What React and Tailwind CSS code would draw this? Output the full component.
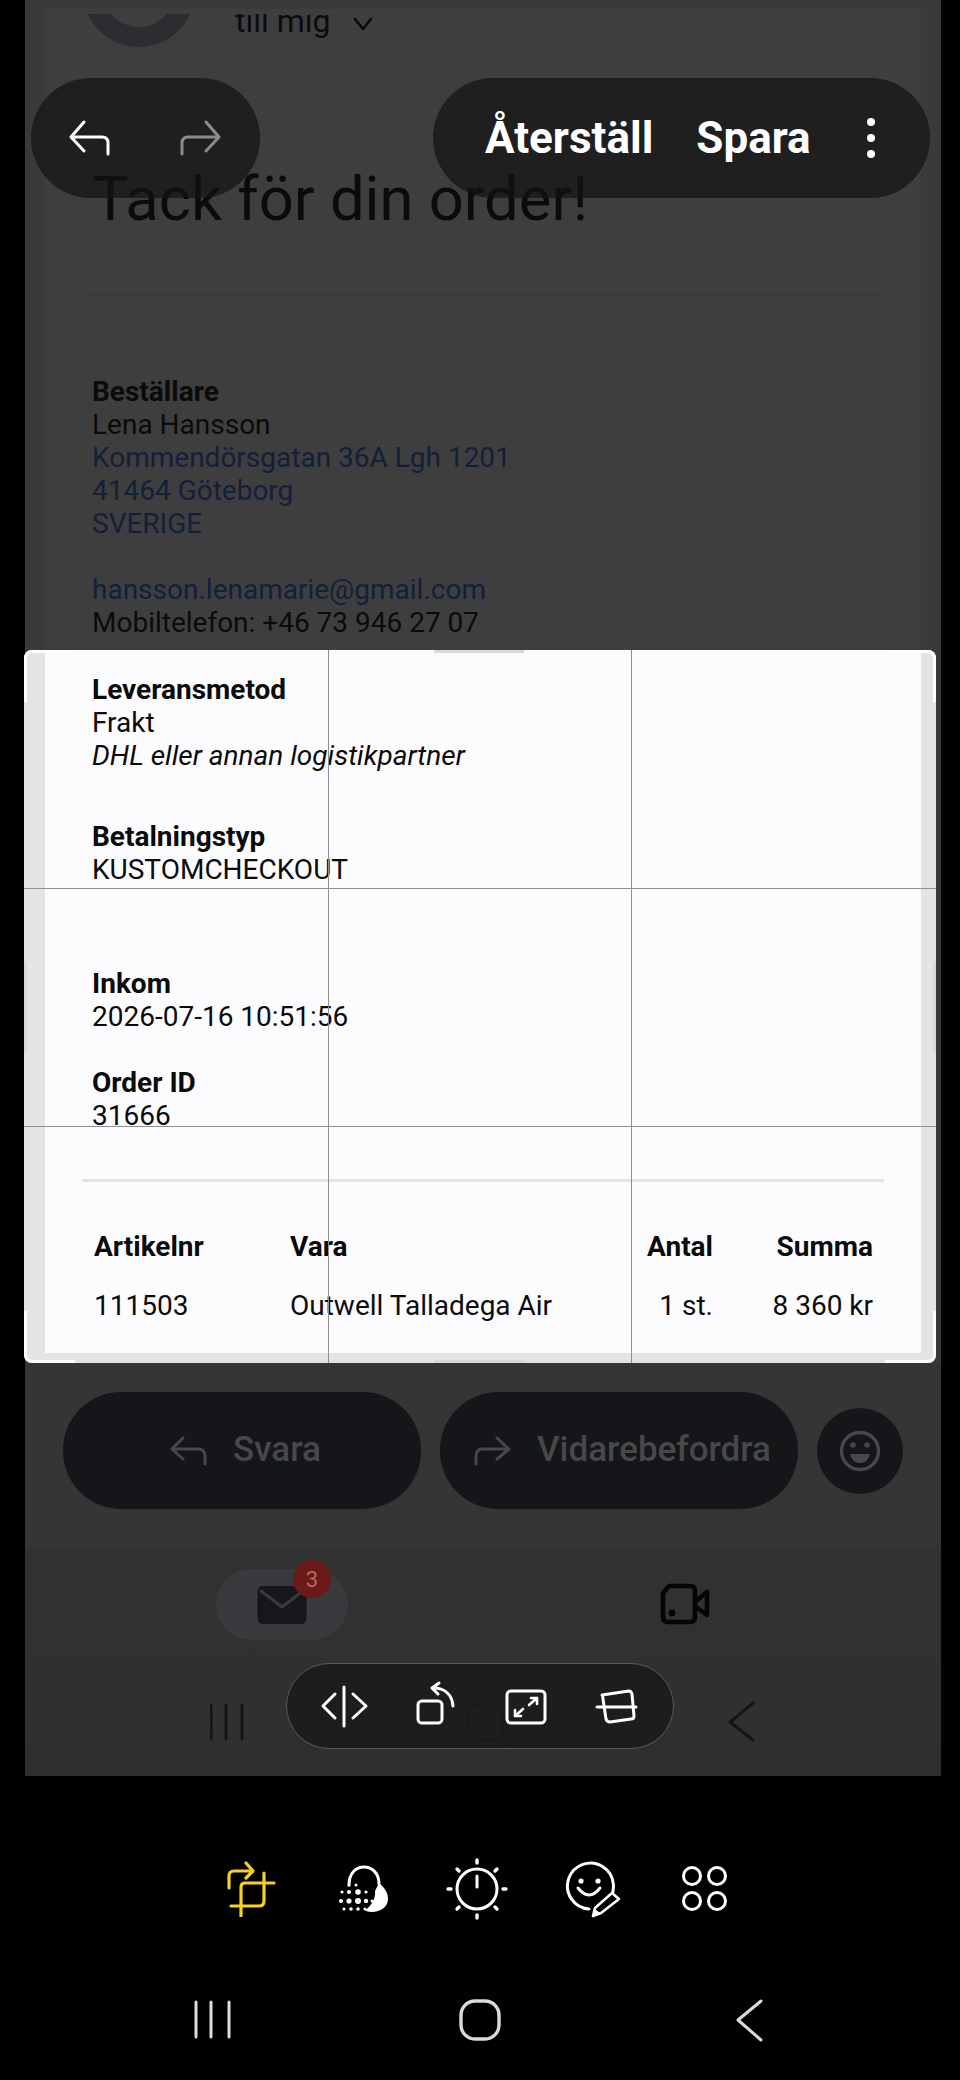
import React from "react";

const Ico = ({ x, y, w, h, className = "", children }) => (
  <svg viewBox={`${x} ${y} ${w} ${h}`} width={w} height={h} fill="none" strokeLinecap="round" strokeLinejoin="round" className={className}>
    {children}
  </svg>
);

const Line = ({ children, className = "" }) => <div className={`h-[33px] leading-[33px] whitespace-nowrap ${className}`}>{children}</div>;
const Bold = ({ children }) => <Line className="font-bold">{children}</Line>;
const Link = ({ children }) => <Line className="text-[#12203a]">{children}</Line>;

const Handles = () => (
  <div className="absolute inset-0 pointer-events-none">
    <div className="absolute top-0 bottom-0 w-px bg-[#8f8f8f]" style={{ left: 304 }} />
    <div className="absolute top-0 bottom-0 w-px bg-[#8f8f8f]" style={{ left: 607 }} />
    <div className="absolute left-0 right-0 h-px bg-[#8f8f8f]" style={{ top: 238 }} />
    <div className="absolute left-0 right-0 h-px bg-[#8f8f8f]" style={{ top: 476 }} />
    <div className="absolute left-0 top-0 w-[51px] h-[52px] border-l-[3px] border-t-[3px] border-white rounded-tl-[8px]" />
    <div className="absolute right-0 top-0 w-[51px] h-[52px] border-r-[3px] border-t-[3px] border-white rounded-tr-[8px]" />
    <div className="absolute left-0 bottom-0 w-[51px] h-[52px] border-l-[3px] border-b-[3px] border-white rounded-bl-[8px]" />
    <div className="absolute right-0 bottom-0 w-[51px] h-[52px] border-r-[3px] border-b-[3px] border-white rounded-br-[8px]" />
    <div className="absolute left-[410px] top-0 w-[90px] h-[3px] bg-[#d8d8d8]" />
    <div className="absolute left-[410px] bottom-0 w-[90px] h-[3px] bg-[#d8d8d8]" />
    <div className="absolute left-0 top-[311px] w-[3px] h-[91px] bg-[#d8d8d8]" />
    <div className="absolute right-0 top-[311px] w-[3px] h-[91px] bg-[#d8d8d8]" />
  </div>
);

const TopBars = () => (
  <>
    <div className="absolute left-[31px] top-[78px] w-[229px] h-[120px] rounded-[60px] bg-[#121212]/70 flex items-center pl-[33px]">
      <Ico x={64} y={116} w={160} h={44} className="block">
        <path d="M84 122 L71 137 L84 151 M71 137 H102 Q108 137 108 143 V154" stroke="#fff" strokeWidth="3" />
        <path d="M206 122 L219 137 L206 151 M219 137 H188 Q182 137 182 143 V154" stroke="#8c8c8c" strokeWidth="3" />
      </Ico>
    </div>
    <div className="absolute left-[433px] top-[78px] w-[497px] h-[120px] rounded-[60px] bg-[#121212]/70 flex items-center text-white font-bold text-[44px] pl-[52px]">
      <span className="leading-none">Återställ</span>
      <span className="leading-none ml-[43px]">Spara</span>
      <Ico x={862} y={114} w={16} h={48} className="ml-[52px]">
        <circle cx="870" cy="122" r="4" fill="#fff" />
        <circle cx="870" cy="138" r="4" fill="#fff" />
        <circle cx="870" cy="154" r="4" fill="#fff" />
      </Ico>
    </div>
  </>
);

const CropPill = () => (
  <div className="absolute left-[286px] top-[1663px] w-[388px] h-[86px] rounded-[43px] bg-[#1c1c1c]/90 border border-[#5a5a5a] flex items-center">
    <svg viewBox="286 1663 388 86" width="388" height="86" fill="none" stroke="#fff" strokeWidth="3" strokeLinecap="round" strokeLinejoin="round" className="-m-px">
      <path d="M344 1687 V1726" />
      <path d="M335 1694 L323 1706 L335 1718 M353 1694 L366 1706 L353 1718" />
      <rect x="418" y="1701" width="24" height="22" rx="4" />
      <path d="M453 1706 C452 1695 445 1688 433 1688 M439 1683 L432 1688 L438 1694" />
      <rect x="507" y="1691" width="38" height="32" rx="4" />
      <path d="M515 1716 L523 1709 M515 1710 V1716 H521 M537 1698 L529 1705 M531 1698 H537 V1704" strokeWidth="2.6" />
      <path d="M602 1695 L629 1691 Q631 1691 632 1694 L634 1716 Q634 1719 631 1719 L610 1722 Q607 1722 606 1719 L603 1699 Q603 1696 602 1695 Z" />
      <path d="M597 1707 H636" />
    </svg>
  </div>
);

export default function App() {
  return (
    <div className="relative w-[960px] h-[2080px] bg-black overflow-hidden font-['Roboto',sans-serif] text-[#0b0b0b]">
      <div className="ml-[25px] w-[916px] h-[1776px] flex flex-col bg-[#3a3a3a]">
        {/* dimmed upper part of the mail */}
        <div className="h-[650px] pt-[9px]">
          <div className="ml-[20px] w-[876px] h-[641px] bg-[#3e3e3e] pt-[5px] pl-[47px] text-[28px]">
            <div className="-ml-[9px] flex items-start h-[33px] overflow-hidden">
              <div className="w-[112px] h-[112px] -mt-[79px] shrink-0 rounded-full border-[20px] border-[#2b2d31]" />
              <span className="ml-[40px] -mt-[9px] text-[32px] leading-[32px]">till mig</span>
              <Ico x={352} y={14} w={22} h={16} className="ml-[21px] mt-[2px]">
                <path d="M355 17 L363 27 L371 17" stroke="#0b0b0b" strokeWidth="2.6" />
              </Ico>
            </div>
            <div className="mt-[118px] text-[61.5px] leading-[68px] font-normal whitespace-nowrap">Tack för din order!</div>
            <div className="-ml-[9px] mr-[35px] mt-[62px] h-px bg-[#383838]" />
            <div className="mt-[79px]">
              <Bold>Beställare</Bold>
              <Line>Lena Hansson</Line>
              <Link>Kommendörsgatan 36A Lgh 1201</Link>
              <Link>41464 Göteborg</Link>
              <Link>SVERIGE</Link>
              <Line />
              <Link>hansson.lenamarie@gmail.com</Link>
              <Line>Mobiltelefon: +46 73 946 27 07</Line>
            </div>
          </div>
        </div>

        {/* bright crop window */}
        <div className="relative h-[713px] w-[912px] -ml-[1px] bg-[#e4e4e4] rounded-[8px]">
          <div className="ml-[21px] w-[876px] h-[703px] bg-[#fcfcff] pl-[47px] pt-[23px] text-[28px]">
            <Bold>Leveransmetod</Bold>
            <Line>Frakt</Line>
            <Line className="italic">DHL eller annan logistikpartner</Line>
            <div className="h-[48px]" />
            <Bold>Betalningstyp</Bold>
            <Line>KUSTOMCHECKOUT</Line>
            <div className="h-[81px]" />
            <Bold>Inkom</Bold>
            <Line>2026-07-16 10:51:56</Line>
            <div className="h-[33px]" />
            <Bold>Order ID</Bold>
            <Line>31666</Line>
            <div className="-ml-[10px] mr-[37px] mt-[47px] h-[3px] bg-[#e4e4e4]" />
            <div className="mt-[48px] ml-[2px] w-[779px] grid grid-cols-[196px_1fr_100px_160px] gap-y-[26px] leading-[33px]">
              <div className="font-bold">Artikelnr</div>
              <div className="font-bold">Vara</div>
              <div className="font-bold text-right">Antal</div>
              <div className="font-bold text-right">Summa</div>
              <div>111503</div>
              <div className="whitespace-nowrap">Outwell Talladega Air</div>
              <div className="text-right">1 st.</div>
              <div className="text-right">8 360 kr</div>
            </div>
          </div>
          <Handles />
        </div>

        {/* dimmed reply row */}
        <div className="h-[184px] bg-[#353535] pl-[38px] pt-[29px]">
          <div className="flex items-center text-[35px] font-medium text-[#47484a]">
            <div className="w-[358px] h-[117px] rounded-[58px] bg-[#15161a] flex items-center pl-[107px] gap-[25px]">
              <Ico x={170} y={1435} w={38} h={30}>
                <path d="M183 1437 L172 1448 L183 1458 M172 1448 H198 Q205 1448 205 1455 V1463" stroke="#47484a" strokeWidth="3" />
              </Ico>
              <span>Svara</span>
            </div>
            <div className="ml-[19px] w-[358px] h-[117px] rounded-[58px] bg-[#15161a] flex items-center pl-[34px] gap-[25px]">
              <Ico x={474} y={1435} w={38} h={30}>
                <path d="M497 1437 L509 1448 L497 1458 M509 1448 H483 Q476 1448 476 1455 V1463" stroke="#47484a" strokeWidth="3" />
              </Ico>
              <span>Vidarebefordra</span>
            </div>
            <div className="ml-[19px] w-[86px] h-[86px] rounded-full bg-[#15161a] flex items-center justify-center">
              <Ico x={838} y={1437} w={44} h={44}>
                <circle cx="860" cy="1459" r="18.5" stroke="#47484a" strokeWidth="3.4" />
                <circle cx="853" cy="1453" r="2.8" fill="#47484a" />
                <circle cx="867" cy="1453" r="2.8" fill="#47484a" />
                <path d="M850 1462 H870 Q868 1471 860 1471 Q852 1471 850 1462 Z" fill="#47484a" />
              </Ico>
            </div>
          </div>
        </div>

        {/* dimmed bottom navigation */}
        <div className="flex-1 bg-gradient-to-b from-[#323232] to-[#2f2f2f] pt-[22px]">
          <div className="flex items-start ml-[191px]">
            <div className="relative w-[132px] h-[71px] rounded-[36px] bg-[#393a3e] flex items-center justify-center">
              <Ico x={257} y={1584} w={50} h={40}>
                <rect x="257.5" y="1585" width="49" height="38" rx="5" fill="#15171c" />
                <path d="M261 1590 L282 1606 L303 1590" stroke="#393a3e" strokeWidth="3" />
              </Ico>
              <div className="absolute left-[77px] -top-[9px] w-[38px] h-[38px] rounded-full bg-[#6b1a1a] text-[#b56a66] text-[22px] flex items-center justify-center">3</div>
            </div>
            <Ico x={658} y={1583} w={52} h={42} className="ml-[311px] mt-[14px]">
              <path d="M668 1586 H689 Q694 1586 694 1591 V1617 Q694 1622 689 1622 H667 Q662 1622 662 1617 V1593 Z" stroke="#050505" strokeWidth="4.6" />
              <path d="M695 1601 L706 1592 V1615 L695 1607" stroke="#050505" strokeWidth="4.6" />
              <circle cx="671" cy="1613" r="3.4" fill="#050505" />
            </Ico>
          </div>
          <div className="flex items-center ml-[185px] mt-[61px]">
            <Ico x={210} y={1702} w={34} h={38}>
              <path d="M211 1704 V1738 M226 1704 V1738 M242 1704 V1738" stroke="#151515" strokeWidth="3" />
            </Ico>
            <Ico x={462} y={1701} w={42} h={42} className="ml-[221px]">
              <rect x="465" y="1704" width="35" height="36" rx="13" stroke="#111" strokeWidth="3" />
            </Ico>
            <Ico x={726} y={1701} w={28} h={42} className="ml-[220px]">
              <path d="M752 1703 L729 1722 L752 1740" stroke="#151515" strokeWidth="3" />
            </Ico>
          </div>
        </div>
      </div>

      {/* editor tool row */}
      <div className="flex items-center pl-[225px] mt-[80px] h-[66px]">
        <Ico x={225} y={1862} w={52} h={56}>
          <path d="M229 1889 V1877 Q229 1872 234 1872 H252 M246 1864 L253 1872 L246 1879" stroke="#f5cf2a" strokeWidth="3.2" />
          <path d="M274 1884 H245 Q241 1884 241 1888 V1917 M231 1907 H259 Q264 1907 264 1902 V1874" stroke="#f5cf2a" strokeWidth="3.2" />
        </Ico>
        <Ico x={338} y={1864} w={52} h={50} className="ml-[61px]">
          <path d="M349 1885 C349 1873 356 1867 364 1867 C372 1867 379 1873 379 1884" stroke="#fff" strokeWidth="3" />
          <path d="M379 1883 C385 1888 388 1893 388 1899 C388 1907 380 1912 372 1912 C368 1912 366 1911 365 1910 C372 1906 376 1897 375 1891 Z" fill="#fff" />
          {[[349,1885,1.5],[356,1885,1.5],[342,1892,1.6],[349,1892,2],[358,1892,2.8],[366,1892,1.6],[341,1901,2],[349,1901,2.6],[358,1901,3],[366,1901,2.2],[372,1901,1.5],[344,1909,1.5],[351,1909,1.8],[358,1909,1.8],[365,1909,1.5]].map(([cx, cy, r], i) => (
            <circle key={i} cx={cx} cy={cy} r={r} fill="#fff" />
          ))}
        </Ico>
        <Ico x={445} y={1858} w={64} h={64} className="ml-[55px]">
          <circle cx="477" cy="1890" r="20" stroke="#fff" strokeWidth="3" />
          <path d="M477 1877 V1888" stroke="#fff" strokeWidth="3" />
          <path d="M477 1861 V1864 M477 1916 V1919 M448 1890 H451 M503 1890 H506 M457 1870 L459 1872 M497 1870 L495 1872 M457 1910 L459 1908 M497 1910 L495 1908" stroke="#fff" strokeWidth="3.4" />
        </Ico>
        <Ico x={563} y={1859} w={60} h={60} className="ml-[54px]">
          <path d="M606 1903 A23 23 0 1 0 589 1909" stroke="#fff" strokeWidth="3" />
          <circle cx="581" cy="1881" r="2.6" fill="#fff" />
          <circle cx="598" cy="1881" r="2.6" fill="#fff" />
          <path d="M578 1888 Q589 1902 600 1888" stroke="#fff" strokeWidth="3" />
          <path d="M612 1893 L619 1899 L601 1913 L593 1916 L595 1908 Z" stroke="#fff" strokeWidth="2.6" fill="#000" />
          <path d="M593 1916 L595 1909 L600 1913 Z" fill="#fff" />
        </Ico>
        <Ico x={680} y={1865} w={50} h={50} className="ml-[57px]">
          {[[692,1877],[717,1877],[692,1902],[717,1902]].map(([cx, cy]) => (
            <circle key={cx + "-" + cy} cx={cx} cy={cy} r="8.5" stroke="#fff" strokeWidth="3" />
          ))}
        </Ico>
      </div>

      {/* system navigation */}
      <div className="flex items-center mt-[76px] pl-[193px]">
        <Ico x={193} y={2000} w={40} h={44}>
          <path d="M196 2004 V2039 M211 2004 V2039 M229 2004 V2039" stroke="#dcdcdc" strokeWidth="3" />
        </Ico>
        <Ico x={458} y={2000} w={44} h={44} className="ml-[225px]">
          <rect x="461" y="2003" width="38" height="38" rx="14" stroke="#dcdcdc" strokeWidth="3.4" />
        </Ico>
        <Ico x={735} y={2000} w={28} h={44} className="ml-[233px]">
          <path d="M761 2003 L738 2022 L761 2042" stroke="#dcdcdc" strokeWidth="3" />
        </Ico>
      </div>

      <TopBars />
      <CropPill />
    </div>
  );
}
